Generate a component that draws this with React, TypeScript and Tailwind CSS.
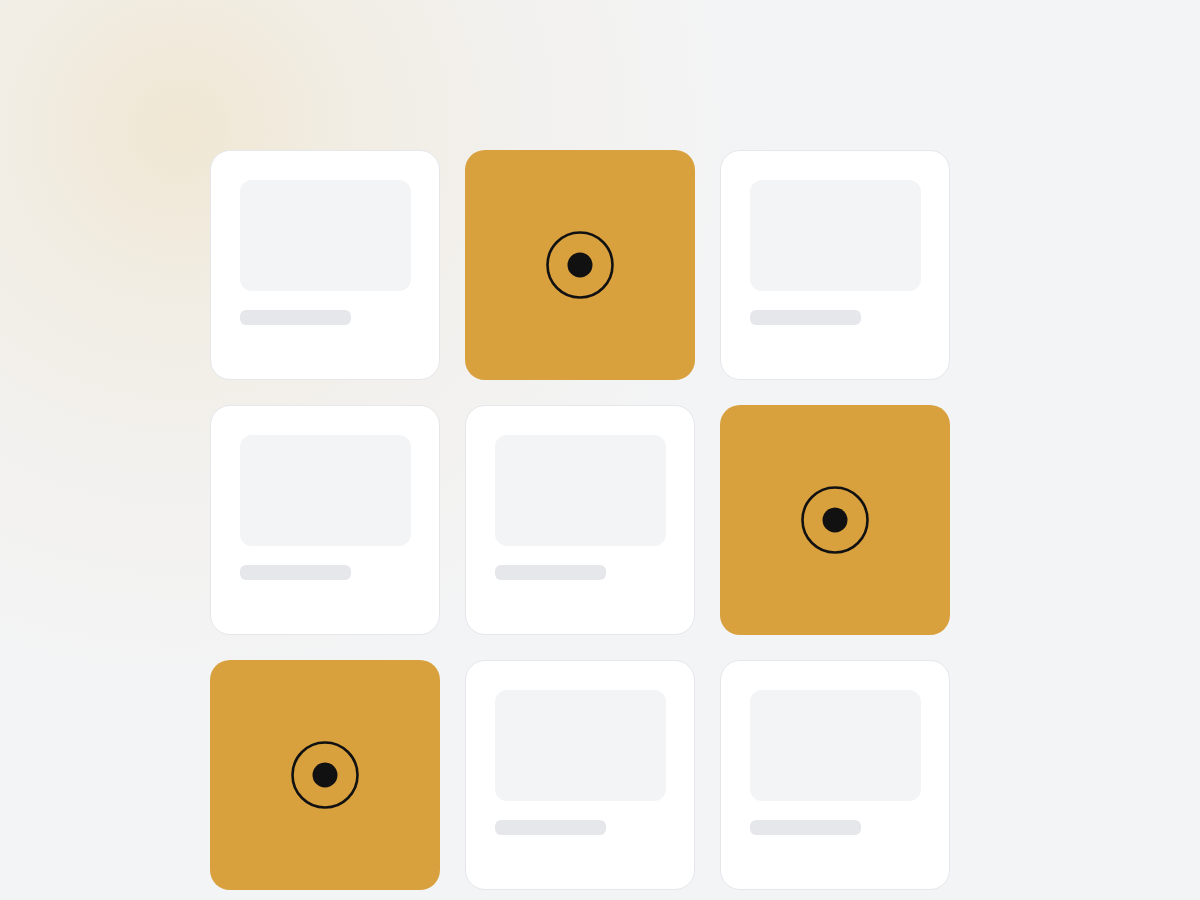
import React from "react";

const active = new Set([1, 5, 6]);

function Target() {
  return (
    <svg width="70" height="70" viewBox="0 0 70 70" fill="none">
      <circle cx="35" cy="35" r="32.5" stroke="#111111" strokeWidth="2.6" />
      <circle cx="35" cy="35" r="12.5" fill="#111111" />
    </svg>
  );
}

export default function App() {
  return (
    <div className="relative min-h-[900px] w-full overflow-hidden bg-[#f3f4f6] bg-[radial-gradient(circle_at_180px_130px,rgba(228,178,72,0.2),rgba(228,178,72,0.11)_160px,rgba(228,178,72,0.04)_360px,transparent_600px)] pl-[210px] pt-[150px]">
      <div className="grid w-[740px] grid-cols-[230px_230px_230px] gap-[25px]">
        {Array.from({ length: 9 }).map((_, i) =>
          active.has(i) ? (
            <div
              key={i}
              className="flex h-[230px] w-[230px] items-center justify-center rounded-[20px] bg-[#d9a03e]"
            >
              <Target />
            </div>
          ) : (
            <div
              key={i}
              className="h-[230px] w-[230px] rounded-[20px] border border-[#e5e7eb] bg-white p-[29px]"
            >
              <div className="h-[111px] w-[171px] rounded-xl bg-[#f3f4f6]" />
              <div className="mt-[19px] h-[15px] w-[111px] rounded-md bg-[#e5e7eb]" />
            </div>
          )
        )}
      </div>
    </div>
  );
}
